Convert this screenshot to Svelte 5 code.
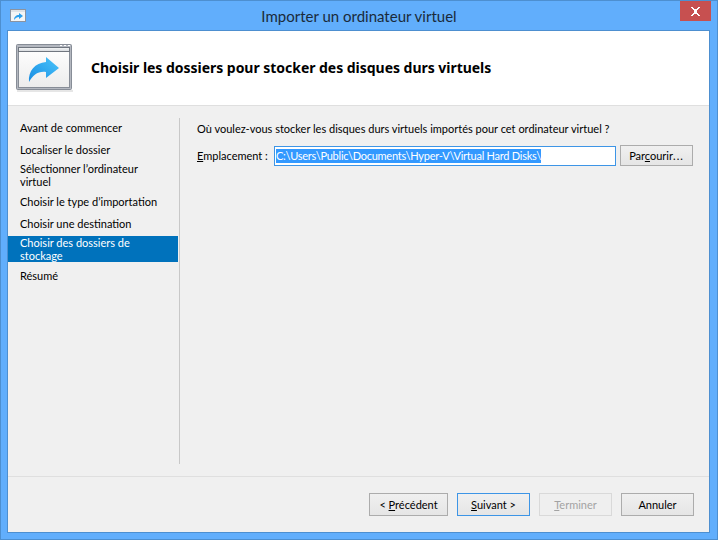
<script>
  const steps = [
    { label: 'Avant de commencer' },
    { label: 'Localiser le dossier' },
    { label: 'Sélectionner l’ordinateur virtuel', double: true },
    { label: 'Choisir le type d’importation' },
    { label: 'Choisir une destination' },
    { label: 'Choisir des dossiers de stockage', double: true, active: true },
    { label: 'Résumé' }
  ];
</script>

<div class="window">
  <div class="titlebar">
    <svg class="small-icon" viewBox="0 0 17 14" aria-hidden="true">
      <rect x="0.500" y="0.500" width="15" height="12" fill="#f4f5f6" stroke="#8b93a0" />
      <rect x="1" y="1" width="14" height="2" fill="#dfe2e6" />
      <path d="M4 11 C4 8 6 6 9 6 L9 4 L13 7 L9 10 L9 8 C7 8 5.500 9 4 11 Z" fill="#2b9fee" />
    </svg>
    <div class="title">Importer un ordinateur virtuel</div>
    <div class="close" aria-label="Fermer">
      <svg viewBox="0 0 9 9" width="9" height="9" shape-rendering="crispEdges" aria-hidden="true">
        <path d="M0 0h2v1h1v1h3V1h1V0h2v1H8v1H7v1H6v3h1v1h1v1h1v1H7V8H6V7H3v1H2v1H0V8h1V7h1V6h1V3H2V2H1V1H0Z" fill="#fff" />
      </svg>
    </div>
  </div>

  <div class="client">
    <header class="head">
      <svg class="big-icon" viewBox="0 0 58 48" aria-hidden="true">
        <defs>
          <linearGradient id="pane" x1="0" y1="0" x2="0" y2="1">
            <stop offset="0" stop-color="#ffffff" />
            <stop offset="1" stop-color="#ececec" />
          </linearGradient>
          <linearGradient id="bar" x1="0" y1="0" x2="0" y2="1">
            <stop offset="0" stop-color="#f6f7f8" />
            <stop offset="1" stop-color="#d4d8dc" />
          </linearGradient>
          <linearGradient id="big-arrow" x1="0.100" y1="1" x2="0.900" y2="0.200">
            <stop offset="0" stop-color="#1b8fe2" />
            <stop offset="0.500" stop-color="#2ea6ee" />
            <stop offset="1" stop-color="#45bdf7" />
          </linearGradient>
        </defs>
        <rect x="1" y="46" width="56" height="2" fill="#e6e6e6" />
        <rect x="0.500" y="0.500" width="55" height="45" rx="1" fill="#b4b8c0" stroke="#878d97" />
        <rect x="2.500" y="3.500" width="51" height="40" fill="url(#pane)" stroke="#878d97" />
        <rect x="2.500" y="3.500" width="51" height="4" fill="url(#bar)" stroke="#70767f" />
        <rect x="44" y="1" width="2" height="1" fill="#fff" />
        <rect x="48" y="1" width="2" height="1" fill="#fff" />
        <rect x="52" y="1" width="2" height="1" fill="#fff" />
        <path d="M13 38 C12 27 19 19 30 18 L30 13 L43 24 L30 34 L30 28 C22 27 17 31 13 38 Z" fill="url(#big-arrow)" />
      </svg>
      <h1>Choisir les dossiers pour stocker des disques durs virtuels</h1>
    </header>

    <main class="body">
      <nav class="side">
        {#each steps as s}
          <div class="step" class:double={s.double} class:active={s.active}>{s.label}</div>
        {/each}
      </nav>
      <section class="content">
        <p class="question">Où voulez-vous stocker les disques durs virtuels importés pour cet ordinateur virtuel ?</p>
        <div class="row">
          <span class="label"><u>E</u>mplacement :</span>
          <div class="field"><span class="selected">C:\Users\Public\Documents\Hyper-V\Virtual Hard Disks\</span></div>
          <button class="btn browse">Par<u>c</u>ourir<span class="dots">...</span></button>
        </div>
      </section>
    </main>

    <footer class="foot">
      <button class="btn prev">&lt; <u>P</u>récédent</button>
      <button class="btn next"><u>S</u>uivant &gt;</button>
      <button class="btn finish" disabled><u>T</u>erminer</button>
      <button class="btn cancel">Annuler</button>
    </footer>
  </div>
</div>

<style>
  :global(body) {
    margin: 0;
    background: #61aefc;
  }
  .window {
    box-sizing: border-box;
    width: 718px;
    height: 540px;
    display: flex;
    flex-direction: column;
    background: #61aefc;
    border: 1px solid #4d8fd0;
    font-family: "Lato", "Open Sans", sans-serif;
    font-size: 11px;
    color: #000;
  }
  .titlebar {
    height: 29px;
    flex: none;
    display: flex;
    align-items: flex-start;
    position: relative;
  }
  .small-icon {
    width: 17px;
    height: 14px;
    margin: 8px 0 0 9px;
    flex: none;
  }
  .title {
    position: absolute;
    left: 0;
    right: 0;
    top: 5px;
    text-align: center;
    font-size: 15px;
    line-height: 20px;
    color: #1a2a3a;
  }
  .close {
    position: absolute;
    left: 679px;
    top: 0;
    width: 31px;
    height: 20px;
    background: #c75050;
    display: flex;
    align-items: center;
    justify-content: center;
  }
  .client {
    flex: 1;
    margin: 0 7px 6px 6px;
    border: 1px solid #4d8fd0;
    background: #f0f0f0;
    display: flex;
    flex-direction: column;
    min-height: 0;
  }
  .head {
    height: 74px;
    flex: none;
    background: #fff;
    border-bottom: 1px solid #dfdfdf;
    display: flex;
    align-items: center;
  }
  .big-icon {
    width: 58px;
    height: 48px;
    margin-left: 8px;
    flex: none;
  }
  h1 {
    margin: 0 0 0 17px;
    font-family: "Noto Sans", sans-serif;
    font-size: 14px;
    font-weight: 700;
    line-height: 20px;
    letter-spacing: -0.03px;
  }
  .body {
    flex: 1;
    display: flex;
    min-height: 0;
    padding-top: 12px;
    padding-bottom: 12px;
    border-bottom: 1px solid #dfdfdf;
  }
  .side {
    width: 170px;
    flex: none;
    display: flex;
    flex-direction: column;
    gap: 4px;
    border-right: 1px solid #c8c8c8;
    padding-right: 1px;
  }
  .step {
    padding: 3px 12px 2px;
    line-height: 13px;
  }
  .step.double {
    padding-top: 0;
    padding-bottom: 0;
  }
  .step.active {
    background: #0072bc;
    color: #fff;
  }
  .content {
    flex: 1;
    padding: 3px 16px 0 17px;
    min-width: 0;
  }
  .question {
    margin: 0;
    line-height: 16px;
  }
  .row {
    display: flex;
    align-items: center;
    margin-top: 8px;
  }
  .label {
    width: 77px;
    flex: none;
    line-height: 16px;
    white-space: nowrap;
  }
  .field {
    box-sizing: border-box;
    width: 342px;
    height: 20px;
    flex: none;
    background: #fff;
    border: 1px solid #3d95e6;
    padding: 2px 1px;
    line-height: 14px;
    white-space: nowrap;
    overflow: hidden;
  }
  .selected {
    background: #3399ff;
    color: #fff;
    display: inline-block;
    line-height: 14px;
    letter-spacing: -0.25px;
  }
  .btn {
    box-sizing: border-box;
    height: 23px;
    padding: 0;
    font: inherit;
    color: #000;
    line-height: 14px;
    border: 1px solid #acacac;
    background: linear-gradient(#f0f0f0, #e5e5e5);
  }
  .browse {
    width: 73px;
    height: 21px;
    margin-left: 4px;
  }
  .dots {
    letter-spacing: 1px;
  }
  .foot {
    height: 55px;
    flex: none;
    display: flex;
    justify-content: flex-end;
    align-items: flex-start;
    gap: 9px;
    padding: 16px 15px 0 0;
    box-sizing: border-box;
  }
  .prev { width: 79px; }
  .next { width: 73px; border-color: #3d95e6; }
  .finish, .cancel { width: 73px; }
  .finish {
    color: #a3a3a3;
    border-color: #d9d9d9;
    background: #efefef;
  }
</style>
